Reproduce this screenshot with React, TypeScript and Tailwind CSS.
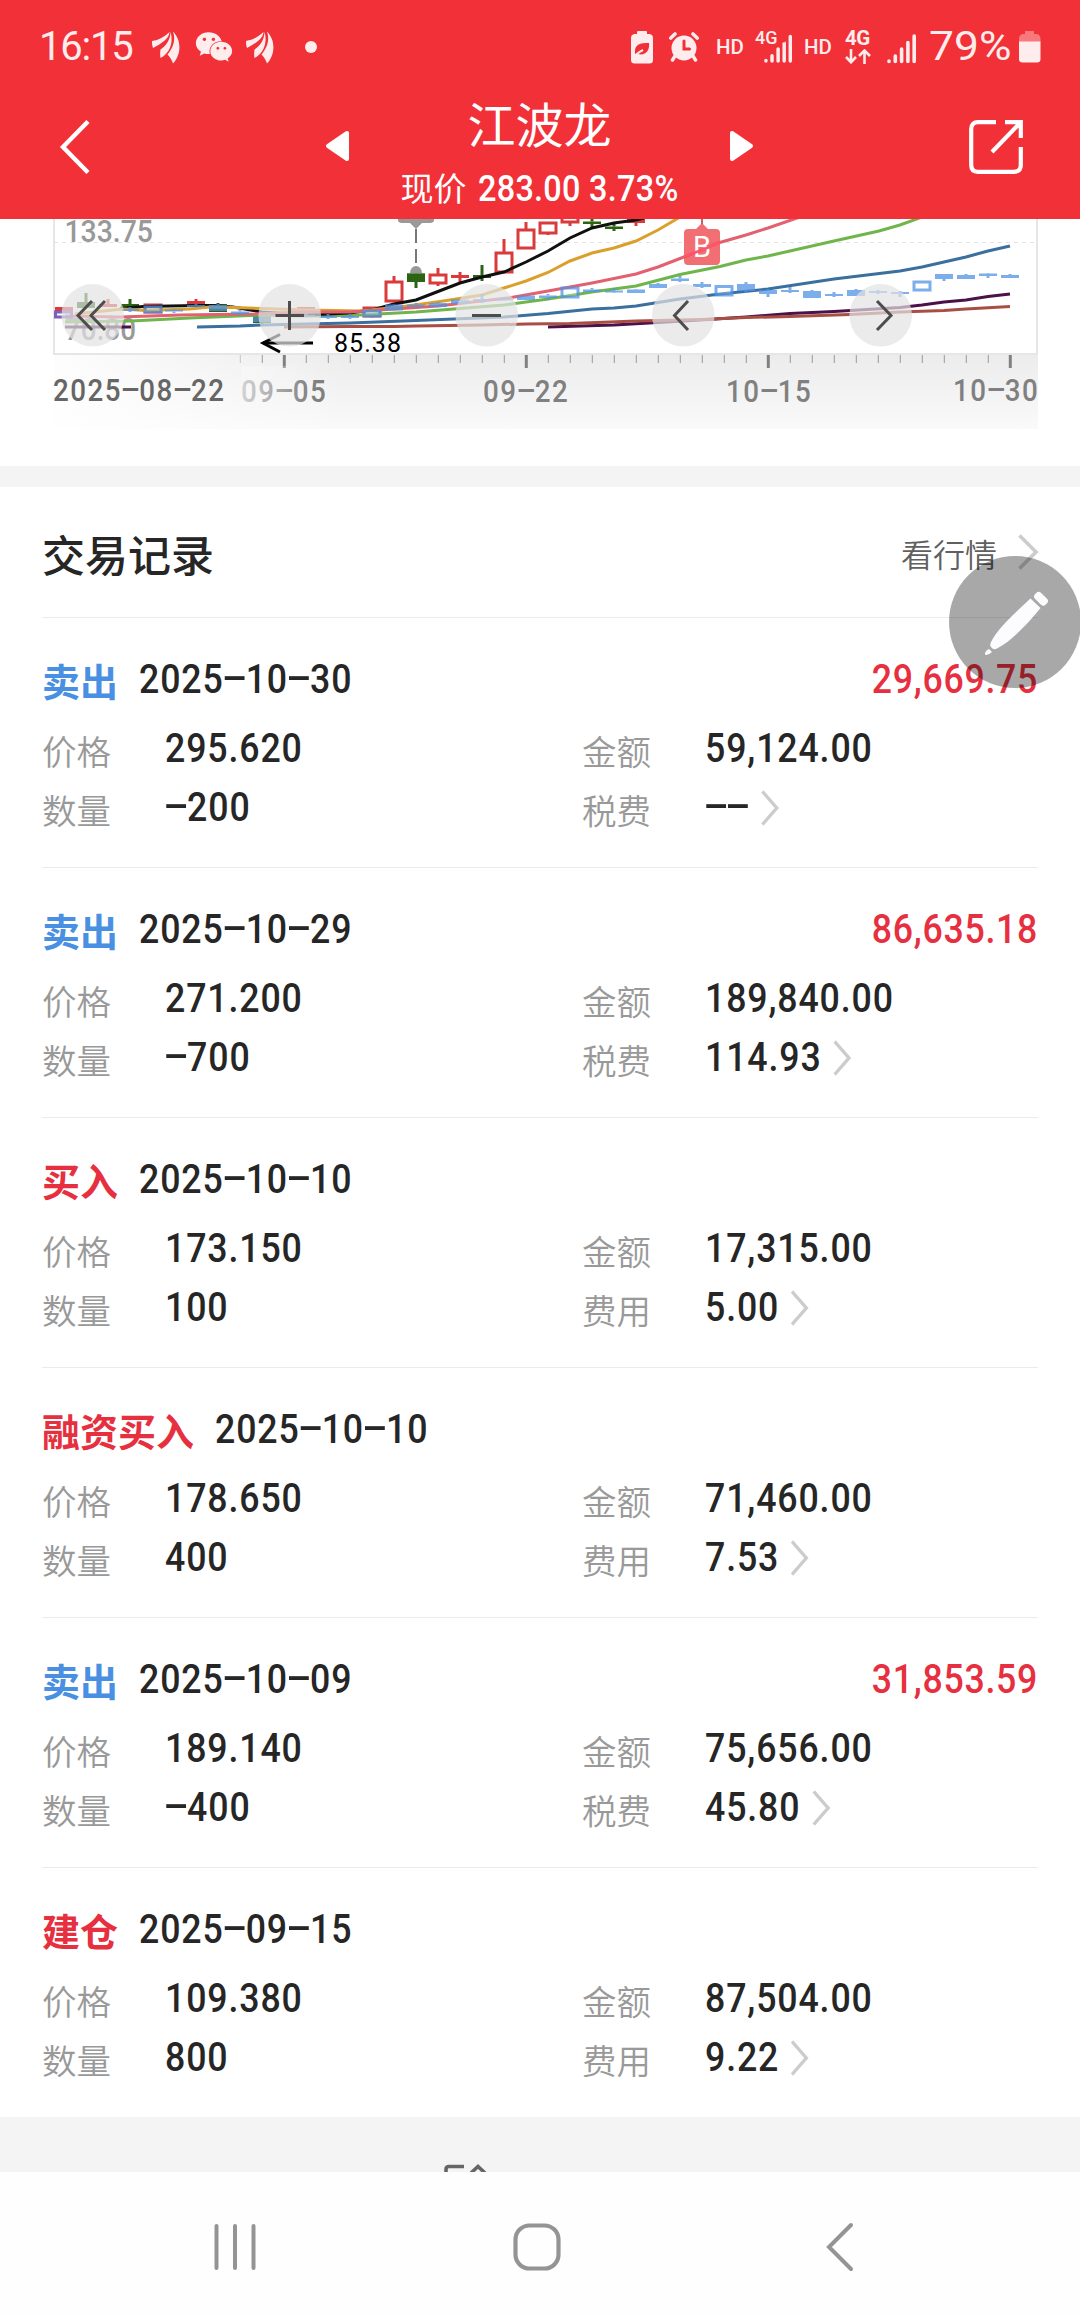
import React from "react";
import { FaWeixin } from "react-icons/fa";

type Candle = [x: number, high: number, top: number, bottom: number, low: number];

const lines = [
    { color: "#3a6f9e", points: "197,327 240,326 262,325 306,324 350,323 416,320.5 504,317 548,313.5 592,309 614,308 636,306 680,299 720,294 768,289 834,279 900,271 922,267 966,257 988,251 1010,246" },
    { color: "#4a1248", points: "548,327 614,325 658,322.5 700,320 746,317 790,313.5 834,311.5 900,307.5 922,305 944,302 966,300 988,296.5 1010,294" },
    { color: "#a94e43", points: "284,327 350,326.5 394,326.5 416,326 482,325 526,324 570,323.5 636,321 702,319.5 746,317.5 790,316.5 850,314.5 900,312 944,310.5 966,309 1010,306.5" },
    { color: "#4a1248", points: "65,327 131,327" },
    { color: "#6fb54c", points: "65,322 131,321 190,318 262,315 306,316 350,315.5 416,312 460,308.5 504,305 548,299 592,292 636,286 680,274.5 720,266.5 746,260 768,256 834,241 879,231 900,225 922,217" },
    { color: "#101010", points: "120,308.5 143,306.5 196,305.5 211,305.5 233,307 262,312 306,315 350,313 375,309.3 394,304 416,300 438,291.5 460,283 482,277 504,272 526,262 548,251 570,238 592,228 614,223 636,220 644,218" },
    { color: "#dba02c", points: "75,314 123,309 145,310.5 189,309 211,307 233,307.5 262,308.5 306,310 360,311 400,307 440,301.5 482,295 504,288 526,281 548,272.5 570,261 592,253 614,248 636,241 658,230 680,217" },
    { color: "#e2606f", points: "65,316 120,317 180,315 255,314 300,312 350,312 394,309 438,306 510,297.7 548,291 592,283 636,274 658,267 680,258.5 702,250 718,243 746,235 768,228 800,217" },
];

const redHollow: Candle[] = [
    [372, 307, 308, 316, 317],
    [394, 276, 282, 301, 301],
    [438, 268, 275, 283, 286],
    [504, 239, 253, 272, 272],
    [526, 222, 230, 248, 248],
    [548, 223, 223, 233, 235],
    [570, 215, 215, 222, 226],
    [153, 305, 305, 312, 312],
];

const redSolid: Candle[] = [
    [64, 307, 307, 311, 311],
    [108, 299, 304, 307, 307],
    [196, 299, 301, 305, 306],
    [306, 307, 307, 310, 310],
    [460, 272, 275, 278, 282],
    [636, 218, 219, 223, 226],
];

const greenSolid: Candle[] = [
    [86, 293, 302, 308, 308],
    [130, 299, 304, 307, 310],
    [218, 303, 304, 312, 312],
    [262, 315, 315.5, 323, 324],
    [416, 273, 273.3, 282, 288],
    [482, 265, 275, 278, 281],
    [592, 219, 221.5, 224, 227],
    [614, 222, 226.5, 229, 231],
];

const blueSolid: Candle[] = [
    [130, 307, 309, 311, 312],
    [174, 309, 309.5, 311.5, 313],
    [196, 304, 305, 307, 307],
    [218, 304, 305, 311, 311],
    [240, 310, 311.5, 314, 315],
    [262, 316, 317, 322, 322],
    [306, 314, 315, 317, 317],
    [328, 314, 316, 318, 319],
    [350, 314, 316, 318, 319],
    [394, 304, 304.5, 310.5, 311],
    [416, 303, 304.5, 307, 307],
    [438, 302, 303, 307, 307],
    [460, 299, 299.5, 304, 304],
    [482, 294, 299, 301, 303],
    [504, 297, 298.5, 300.5, 301],
    [526, 295, 295.5, 300, 300],
    [548, 294, 295.5, 298, 300],
    [592, 288, 289.5, 292, 292],
    [614, 288, 290.5, 292.5, 293],
    [636, 289, 289.5, 293, 293],
    [658, 283, 284, 288, 288],
    [680, 276, 278.5, 281, 282],
    [702, 282, 284, 287, 288],
    [746, 282, 284, 291, 293],
    [768, 289, 290, 294, 297],
    [790, 287, 290, 292, 293],
    [812, 290, 291, 298, 298],
    [834, 292, 294, 296, 297],
    [856, 289, 290, 296, 296],
    [878, 290, 291, 293, 294],
    [900, 291, 292, 294, 297],
    [944, 274, 274, 279, 281],
    [966, 274, 275, 279, 279],
    [988, 273, 273.5, 276, 278],
    [1010, 274, 275, 278, 278],
];

const blueHollow: Candle[] = [
    [372, 311, 311, 316, 318],
    [153, 306, 307, 312, 312],
    [570, 287, 288, 297, 297],
    [724, 286, 286.5, 295, 295],
    [922, 281, 282, 290, 290],
];

const ticks = Array.from({ length: 36 }, (_, i) => 240.3 + i * 22);

const records = [
    { type: "卖出", tone: "text-[#4a90e2]", date: "2025-10-30", profit: "29,669.75", price: "295.620", count: "-200", amount: "59,124.00", feeLabel: "税费", fee: "--" },
    { type: "卖出", tone: "text-[#4a90e2]", date: "2025-10-29", profit: "86,635.18", price: "271.200", count: "-700", amount: "189,840.00", feeLabel: "税费", fee: "114.93" },
    { type: "买入", tone: "text-[#e6303f]", date: "2025-10-10", profit: "", price: "173.150", count: "100", amount: "17,315.00", feeLabel: "费用", fee: "5.00" },
    { type: "融资买入", tone: "text-[#e6303f]", date: "2025-10-10", profit: "", price: "178.650", count: "400", amount: "71,460.00", feeLabel: "费用", fee: "7.53" },
    { type: "卖出", tone: "text-[#4a90e2]", date: "2025-10-09", profit: "31,853.59", price: "189.140", count: "-400", amount: "75,656.00", feeLabel: "税费", fee: "45.80" },
    { type: "建仓", tone: "text-[#e6303f]", date: "2025-09-15", profit: "", price: "109.380", count: "800", amount: "87,504.00", feeLabel: "费用", fee: "9.22" },
];

// Condensed figures; hyphens take the width of a digit
function Num({ children, className = "" }: { children: string; className?: string }) {
    return (
        <span className={`inline-block whitespace-nowrap font-[Roboto,sans-serif] ${className}`}>
            {children.split("").map((c, i) =>
                c === "-" ? (
                    <span key={i} className="inline-block w-[0.62em] text-center tracking-normal">
                        <span className="inline-block scale-x-[2.15] -translate-y-[0.06em]">-</span>
                    </span>
                ) : (
                    c
                )
            )}
        </span>
    );
}

function Chevron({ className = "" }: { className?: string }) {
    return (
        <svg width="21" height="36" viewBox="0 0 21 36" fill="none" stroke="#ccc" strokeWidth="3.6" className={className}>
            <path d="M1.5 1.5L18 18L1.5 34.5" />
        </svg>
    );
}

function Feather({ className = "" }: { className?: string }) {
    return (
        <svg width="29" height="33" viewBox="0 0 29 33" fill="#ffecec" className={className}>
            <path d="M0 10C7 9 12 6 17.500 1C17 8 10 12 1 17C0 14 0 12 0 10Z" />
            <path d="M18.500 1C18 9 15 14 8.500 18.500C8 22 8 24 8.500 27C17 23 22 12 18.500 1Z" />
            <path d="M21 0.500C24 9 21 17 15.500 23.500C18 26 20 29 21 32.500C28 25 31 11 21 0.500Z" />
        </svg>
    );
}

function Bars({ className = "" }: { className?: string }) {
    return (
        <svg width="30" height="30" viewBox="0 0 30 30" stroke="#ffecec" strokeWidth="3.6" strokeLinecap="round" className={className}>
            <path d="M2 27V27.500M8.300 22V27.500M14.600 15V27.500M20.900 8.500V27.500M27.200 2V27.500" />
        </svg>
    );
}

function StatusBar() {
    return (
        <div className="flex h-[94px] items-center text-[#ffecec] font-[Roboto,sans-serif]">
            <span className="ml-[39px] w-[113px] text-[40px] tracking-[-1.2px]">16:15</span>
            <Feather />
            <FaWeixin size={38} className="ml-[14px]" />
            <Feather className="ml-[13px]" />
            <span className="ml-[30px] size-3 rounded-full bg-[#ffecec]" />

            <svg width="22" height="33" viewBox="0 0 22 33" className="ml-auto">
                <path d="M7 0H15Q16 0 16 1V3H18.500Q22 3.500 22 7V29Q22 32.500 18.500 32.500H3.500Q0 32.500 0 29V7Q0 3.500 3.500 3H6V1Q6 0 7 0Z" fill="#ffecec" />
                <path d="M4 23C3 13 9 12 18 12C19 20 14 25 7 23" fill="#f03038" />
                <path d="M3 25C6 23 8 21 12 19" stroke="#ffecec" strokeWidth="2" fill="none" />
            </svg>
            <svg width="30" height="30" viewBox="0 0 30 30" fill="none" stroke="#ffecec" strokeLinecap="round" className="ml-[16px]">
                <circle cx="15" cy="16" r="12.500" fill="#ffecec" stroke="none" />
                <path d="M1.800 6L6 2M28.200 6L24 2" strokeWidth="3.600" />
                <path d="M6 24L3.500 28M24 24L26.500 28" strokeWidth="3.400" />
                <path d="M15 9V17H20.500" stroke="#f03038" strokeWidth="3" />
            </svg>
            <span className="ml-[17px] w-[39px] text-[20.5px] font-medium">HD</span>
            <span className="relative flex h-[33px] w-[38px]">
                <span className="absolute left-0 top-0 text-[18px] leading-[14px] font-medium">4G</span>
                <Bars className="ml-[9px] mt-[3px] [clip-path:polygon(0_60%,40%_60%,40%_42%,50%_42%,50%_30%,72%_30%,72%_0,100%_0,100%_100%,0_100%)]" />
            </span>
            <span className="ml-[11px] w-[41px] text-[20.5px] font-medium">HD</span>
            <span className="flex h-[34px] w-[26px] flex-col">
                <span className="text-[20.5px] leading-[16px] font-bold tracking-[-0.5px]">4G</span>
                <svg width="26" height="15" viewBox="0 0 26 15" fill="none" stroke="#ffecec" strokeWidth="2.600" className="mt-[3px]">
                    <path d="M6 0V13M1 8L6 13.200L11 8M19.500 15V1.500M14 7L19.500 1.500L25 7" />
                </svg>
            </span>
            <Bars className="ml-[16px] mt-[3px]" />
            <span className="ml-[12px] w-[90px] text-[40px]">
                <span className="inline-block origin-left scale-x-[1.11]">79%</span>
            </span>
            <svg width="22" height="32" viewBox="0 0 22 32" className="mr-[39px]">
                <path d="M6 0H15V3H18Q21.500 4 21.500 8V11H0V8Q0 4 3.500 3H6Z" fill="#f8787c" />
                <path d="M0 10.500H21.500V28Q21.500 31.500 18 31.500H3.500Q0 31.500 0 28Z" fill="#ffecec" />
            </svg>
        </div>
    );
}

function Header() {
    return (
        <header className="h-[219px] bg-[#f23038]">
            <StatusBar />
            <div className="flex h-[120px] items-center text-white">
                <svg width="32" height="54" viewBox="0 0 32 54" fill="none" stroke="white" strokeWidth="4.400" className="ml-[59px] mt-[-14px]">
                    <path d="M29 1.500L4 27L29 52.500" />
                </svg>
                <svg width="26" height="32" viewBox="0 0 26 32" fill="white" stroke="white" strokeWidth="4" strokeLinejoin="round" className="ml-[234px] mt-[-16px]">
                    <path d="M3 16L22 3V29Z" />
                </svg>
                <div className="flex w-[377px] flex-col items-center">
                    <h1 className="mt-[2px] font-['Noto_Sans_CJK_SC',sans-serif] text-[48px] font-normal leading-[64px]">江波龙</h1>
                    <div className="flex w-[278px] items-center leading-[64px]">
                        <span className="w-[77px] shrink-0 font-['Noto_Sans_CJK_SC',sans-serif] text-[33px]">现价</span>
                        <Num className="origin-left scale-x-[0.9] pt-[3px] text-[36px] font-medium tracking-[0.3px]">283.00 3.73%</Num>
                    </div>
                </div>
                <svg width="26" height="32" viewBox="0 0 26 32" fill="white" stroke="white" strokeWidth="4" strokeLinejoin="round" className="mt-[-16px]">
                    <path d="M23 16L4 3V29Z" />
                </svg>
                <svg width="54" height="54" viewBox="0 0 54 54" fill="none" stroke="white" strokeWidth="4.200" className="ml-auto mr-[57px] mt-[-14px]">
                    <path d="M27 2.200H9Q2.200 2.200 2.200 9V45Q2.200 51.800 9 51.800H45Q51.800 51.800 51.800 45V27" />
                    <path d="M36 2.200H51.800V18M51 3L23 32" />
                </svg>
            </div>
        </header>
    );
}

function Candles({ data, color, hollow }: { data: Candle[]; color: string; hollow?: boolean }) {
    return (
        <g stroke={color} strokeWidth="3">
            {data.map(([x, high, top, bottom, low]) => (
                <g key={`${x}-${top}`}>
                    {high < top && <path d={`M${x} ${high}V${top}`} />}
                    {low > bottom && <path d={`M${x} ${bottom}V${low}`} />}
                    {hollow ? (
                        <rect x={x - 8} y={top} width="16" height={bottom - top} fill="white" fillOpacity="0.4" />
                    ) : (
                        <rect x={x - 9} y={top} width="18" height={bottom - top} fill={color} stroke="none" />
                    )}
                </g>
            ))}
        </g>
    );
}

function Chart() {
    return (
        <section className="h-[247px] bg-white">
            <svg width="1080" height="142" viewBox="0 219 1080 142" className="-mb-[6px] block">
                <path d="M54 217V354H1037V217" fill="none" stroke="#e6e6e6" strokeWidth="2" />
                <path d="M54 242.500H1037" stroke="#e2e2e2" strokeDasharray="4 4" />
                <g fill="#999" className="font-[Roboto,sans-serif] text-[31px] font-medium">
                    <text x="64.500" y="242" textLength="88.500" lengthAdjust="spacingAndGlyphs">133.75</text>
                    <text x="65" y="340" textLength="71" lengthAdjust="spacingAndGlyphs">70.80</text>
                </g>

                <Candles data={redHollow} color="#d93a3a" hollow />
                <Candles data={redSolid} color="#d93a3a" />
                <Candles data={greenSolid} color="#2c6414" />
                {lines.map((line) => (
                    <polyline key={line.points} points={line.points} fill="none" stroke={line.color} strokeWidth="3" />
                ))}
                <g opacity="0.75">
                    <Candles data={blueSolid} color="#4f93e3" />
                    <Candles data={blueHollow} color="#4f93e3" hollow />
                </g>
                <rect x="55.500" y="312" width="16" height="5" fill="none" stroke="#7a62b8" strokeWidth="3" />

                {/* trade markers */}
                <path d="M398 217H434V220Q434 223 430 223H422L416 229L410 223H402Q398 223 398 220Z" fill="#999" />
                <path d="M416 229V267" stroke="#777" strokeWidth="2" strokeDasharray="14 6" />
                <path d="M410 273A6 7 0 0 1 422 273Z" fill="#999" />
                <path d="M702 217V224" stroke="#a33" strokeWidth="1.500" />
                <path d="M688 229H696L702 223L708 229H716Q720 229 720 233V261Q720 265 716 265H688Q684 265 684 261V233Q684 229 688 229Z" fill="#ee4b50" fillOpacity="0.8" />
                <text x="702" y="257" textAnchor="middle" fill="white" className="font-[Roboto,sans-serif] text-[29px]">B</text>
                <polyline points="684,256.500 702,250 720,242.500" fill="none" stroke="#ff5470" strokeWidth="2.600" />

                <path d="M313 343H263" stroke="black" strokeWidth="3" />
                <path d="M280 334.500L263 343L280 352" fill="none" stroke="black" strokeWidth="3" />
                <text x="334" y="352" textLength="67" className="font-[Roboto,sans-serif] text-[25px]">85.38</text>

                <g fill="#e2e2e2" fillOpacity="0.7">
                    {[92.7, 289.7, 486.7, 683.3, 880.7].map((cx) => (
                        <circle key={cx} cx={cx} cy="315.300" r="31.300" />
                    ))}
                </g>
                <g fill="none" stroke="#4d4d4d" strokeWidth="3">
                    <path d="M92 301L78 315.500L92 330M105 301L91 315.500L105 330" />
                    <path d="M275.500 315.500H304M289.500 301V330" />
                    <path d="M472 315.500H501" />
                    <path d="M688 301L674.500 315.500L688 330" />
                    <path d="M877 301L891 315.500L877 330" />
                </g>
            </svg>

            <div className="mx-[54px] h-[74px] w-[984px] bg-linear-to-b from-[#ececec] to-[#fafafa]">
                <div className="h-full bg-linear-to-r from-white/90 to-transparent to-30%">
                    <svg width="984" height="14" viewBox="54 0 984 14" className="block">
                        {ticks.map((x, i) => {
                            const major = (i - 2) % 11 === 0;
                            return (
                                <path key={x} d={`M${x} 0V${major ? 13 : 8}`} stroke={major ? "#808080" : "#999"} strokeWidth={major ? 3 : 1} opacity={i === 0 ? 0.5 : 1} />
                            );
                        })}
                    </svg>
                    <div className="-ml-px flex h-[44px] items-center text-[31.5px] font-medium tracking-[1.7px] text-[#808080]">
                        <Num className="w-[188px] shrink-0 origin-left scale-x-[0.88] text-[#666]">2025-08-22</Num>
                        <span className="relative w-[242px] shrink-0">
                            <Num className="origin-left scale-x-[0.88]">09-05</Num>
                            <span className="absolute inset-y-0 left-0 w-[70px] bg-linear-to-r from-[#f8f8f8]/70 to-transparent" />
                        </span>
                        <span className="w-[243px] shrink-0">
                            <Num className="origin-left scale-x-[0.88]">09-22</Num>
                        </span>
                        <span className="w-[227px] shrink-0">
                            <Num className="origin-left scale-x-[0.88]">10-15</Num>
                        </span>
                        <Num className="origin-left scale-x-[0.88]">10-30</Num>
                    </div>
                </div>
            </div>
        </section>
    );
}

function Field({ label, value, arrow }: { label: string; value: string; arrow?: boolean }) {
    return (
        <div className="flex h-[59px] w-[540px] shrink-0 items-center">
            <span className="w-[123px] shrink-0 pt-[4px] font-['Noto_Sans_CJK_SC',sans-serif] text-[34.5px] font-[350] text-[#999]">{label}</span>
            <span className="flex origin-left scale-x-[0.87] items-center text-[41px] font-medium tracking-[1px] text-[#262626]">
                <Num>{value}</Num>
                {arrow && <Chevron className="ml-[13px] w-[22px]" />}
            </span>
        </div>
    );
}

function Records() {
    return (
        <section className="mt-[21px] bg-white px-[42px]">
            <div className="flex h-[130px] items-center justify-between pt-[2px] font-['Noto_Sans_CJK_SC',sans-serif]">
                <h2 className="text-[43px] font-medium text-[#262626]">交易记录</h2>
                <div className="flex items-center text-[32px] font-[350] text-[#606060]">
                    看行情
                    <Chevron className="-mr-px ml-[21px] mt-[-2px]" />
                </div>
            </div>

            {records.map((r, idx) => (
                <div key={idx} className="h-[250px] border-t border-[#ebebeb] pt-[31px]">
                    <div className="flex h-[60px] items-center">
                        <span className={`pt-px font-['Noto_Sans_CJK_SC',sans-serif] text-[38px] font-bold ${r.tone}`}>{r.type}</span>
                        <Num className="ml-[21px] mt-[2px] origin-left scale-x-[0.87] text-[41px] font-medium tracking-[1px] text-[#262626]">{r.date}</Num>
                        <Num className="ml-auto mt-[2px] origin-right scale-x-[0.87] text-[41px] font-medium tracking-[0.8px] text-[#e6303f]">{r.profit}</Num>
                    </div>
                    <div className="mt-[10px] flex">
                        <Field label="价格" value={r.price} />
                        <Field label="金额" value={r.amount} />
                    </div>
                    <div className="flex">
                        <Field label="数量" value={r.count} />
                        <Field label={r.feeLabel} value={r.fee} arrow />
                    </div>
                </div>
            ))}
        </section>
    );
}

export default function App() {
    return (
        <main className="relative flex h-[2316px] w-[1080px] flex-col overflow-hidden bg-[#f4f4f4]">
            <Header />
            <Chart />
            <Records />

            <div className="flex h-[55px] items-end pl-[444px]">
                <svg width="42" height="8" viewBox="0 0 42 8" fill="none" stroke="#666" strokeWidth="3.600">
                    <path d="M2 9V5Q2 2.500 5 2.500H20M27 9L34 2.500L41 9" />
                </svg>
            </div>

            <nav className="flex h-[144px] items-center bg-[#fefefe]">
                <svg width="42" height="48" viewBox="0 0 42 48" stroke="#949494" strokeWidth="4" strokeLinecap="round" className="ml-[214px] mt-[6px]">
                    <path d="M2.500 3V45M21 3V45M39.500 3V45" />
                </svg>
                <svg width="48" height="48" viewBox="0 0 48 48" fill="none" stroke="#949494" strokeWidth="4.200" className="ml-[257px] mt-[6px]">
                    <rect x="2.500" y="2.500" width="43" height="43" rx="14" />
                </svg>
                <svg width="28" height="50" viewBox="0 0 28 50" fill="none" stroke="#949494" strokeWidth="4" strokeLinecap="round" className="ml-[265px] mt-[6px]">
                    <path d="M25 3L3 25L25 47" />
                </svg>
            </nav>

            {/* floating edit button */}
            <div className="absolute left-[949px] top-[556px] size-[132px] rounded-full bg-black/34 pl-[35px] pt-[33px]">
                <svg width="66" height="68" viewBox="0 0 66 68" fill="#fcfcff">
                    <path d="M46.500 9.500L56.500 19C46 32 28 52 13 59.500Q10 61 8.500 59.500L7 58Q5.500 56.500 7 53C14 39 31 24 46.500 9.500Z" />
                    <path d="M5 60L8 63Q5 66 2 66Q0.500 66 1 64Q2 61 5 60Z" />
                    <rect x="49.500" y="5.500" width="15" height="8.500" rx="3.500" transform="rotate(45 57 9.750)" />
                </svg>
            </div>
        </main>
    );
}
